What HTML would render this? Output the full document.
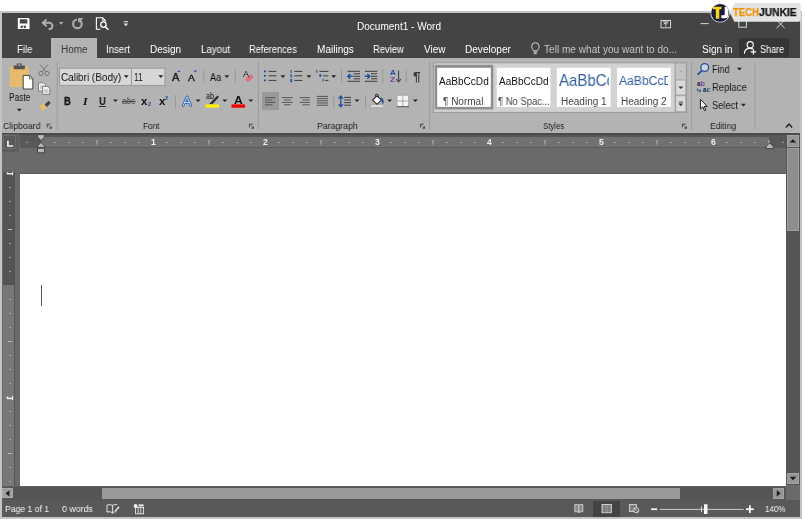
<!DOCTYPE html>
<html><head><meta charset="utf-8"><title>Document1 - Word</title>
<style>
*{box-sizing:border-box;margin:0;padding:0}
html,body{width:805px;height:519px;overflow:hidden;background:#fff}
body{font-family:"Liberation Sans",sans-serif;font-size:10px;position:relative}
.r{position:absolute}
.t{position:absolute;white-space:nowrap;line-height:12px;transform-origin:0 0;will-change:transform}
svg{position:absolute;left:0;top:0}
</style></head><body>
<div class="r" style="left:0px;top:11px;width:802px;height:508px;background:#c4c4c4;"></div>
<div class="r" style="left:2px;top:13px;width:798px;height:45px;background:#444444;"></div>
<div class="r" style="left:51px;top:38px;width:46px;height:20px;background:#b3b3b3;"></div>
<div class="r" style="left:739px;top:38px;width:50px;height:19px;background:#363636;"></div>
<div class="r" style="left:2px;top:58px;width:798px;height:74.6px;background:#b3b3b3;"></div>
<div class="r" style="left:2px;top:132.6px;width:798px;height:2.4px;background:#4b4b4b;"></div>
<div class="r" style="left:2px;top:135px;width:798px;height:365px;background:#6a6a6a;"></div>
<div class="r" style="left:2px;top:135px;width:798px;height:2px;background:#585858;"></div>
<div class="r" style="left:20px;top:137px;width:766px;height:10px;background:#717171;"></div>
<div class="r" style="left:20px;top:137px;width:21px;height:10px;background:#585858;"></div>
<div class="r" style="left:769px;top:137px;width:17px;height:10px;background:#585858;"></div>
<div class="r" style="left:20px;top:147px;width:766px;height:1px;background:#5c5c5c;"></div>
<div class="r" style="left:2px;top:133.5px;width:17px;height:18px;background:#5e5e5e;"></div>
<div class="r" style="left:3.4px;top:135.4px;width:13px;height:13.2px;background:#595959;border:1px solid #6c6c6c;"></div>
<div class="r" style="left:20px;top:172.6px;width:766px;height:314.4px;background:#5c5c5c;"></div>
<div class="r" style="left:20px;top:173.6px;width:766px;height:312.7px;background:#ffffff;"></div>
<div class="r" style="left:2.6px;top:171.9px;width:12.8px;height:315.1px;background:#555555;"></div>
<div class="r" style="left:3.4px;top:171.9px;width:11px;height:315.1px;background:#777777;"></div>
<div class="r" style="left:3.4px;top:171.9px;width:11px;height:113.6px;background:#595959;"></div>
<div class="r" style="left:2.6px;top:171.9px;width:12.8px;height:113.6px;background:#4f4f4f;opacity:.5;"></div>
<div class="r" style="left:786px;top:135px;width:14px;height:350px;background:#555555;"></div>
<div class="r" style="left:787.2px;top:135px;width:11.6px;height:11.6px;background:#969696;border:1px solid #a4a4a4;"></div>
<div class="r" style="left:787.2px;top:147.8px;width:11.6px;height:83.2px;background:#8e8e8e;border:1px solid #a0a0a0;"></div>
<div class="r" style="left:787.2px;top:472.6px;width:11.6px;height:11.2px;background:#969696;border:1px solid #a4a4a4;"></div>
<div class="r" style="left:786px;top:485px;width:14px;height:15px;background:#6a6a6a;"></div>
<div class="r" style="left:2px;top:486.3px;width:784px;height:0.9px;background:#5e5e5e;"></div>
<div class="r" style="left:2px;top:487.2px;width:784px;height:12.8px;background:#555555;"></div>
<div class="r" style="left:2.2px;top:488px;width:10.9px;height:10.4px;background:#9e9e9e;border:1px solid #a8a8a8;"></div>
<div class="r" style="left:101.5px;top:488px;width:578.9px;height:10.6px;background:#9a9a9a;"></div>
<div class="r" style="left:773px;top:488px;width:11px;height:10.7px;background:#969696;border:1px solid #a4a4a4;"></div>
<div class="r" style="left:2px;top:500px;width:798px;height:16.5px;background:#595959;"></div>
<div class="r" style="left:593.3px;top:501px;width:27px;height:15.5px;background:#444444;"></div>
<div class="r" style="left:41px;top:285px;width:1.2px;height:20.8px;background:#555555;"></div>
<div class="r" style="left:261.8px;top:92.2px;width:17.2px;height:18px;background:#9a9a9a;"></div>
<svg width="805" height="519" viewBox="0 0 805 519">
<rect x="26.4" y="141.8" width="1.2" height="1.2" fill="#b9b9b9"/><rect x="54.4" y="141.8" width="1.2" height="1.2" fill="#b9b9b9"/><rect x="68.4" y="141.8" width="1.2" height="1.2" fill="#b9b9b9"/><rect x="82.4" y="141.8" width="1.2" height="1.2" fill="#b9b9b9"/><rect x="96.5" y="140" width="1" height="4.6" fill="#b9b9b9"/><rect x="110.4" y="141.8" width="1.2" height="1.2" fill="#b9b9b9"/><rect x="124.4" y="141.8" width="1.2" height="1.2" fill="#b9b9b9"/><rect x="138.4" y="141.8" width="1.2" height="1.2" fill="#b9b9b9"/><rect x="166.4" y="141.8" width="1.2" height="1.2" fill="#b9b9b9"/><rect x="180.4" y="141.8" width="1.2" height="1.2" fill="#b9b9b9"/><rect x="194.4" y="141.8" width="1.2" height="1.2" fill="#b9b9b9"/><rect x="208.5" y="140" width="1" height="4.6" fill="#b9b9b9"/><rect x="222.4" y="141.8" width="1.2" height="1.2" fill="#b9b9b9"/><rect x="236.4" y="141.8" width="1.2" height="1.2" fill="#b9b9b9"/><rect x="250.4" y="141.8" width="1.2" height="1.2" fill="#b9b9b9"/><rect x="278.4" y="141.8" width="1.2" height="1.2" fill="#b9b9b9"/><rect x="292.4" y="141.8" width="1.2" height="1.2" fill="#b9b9b9"/><rect x="306.4" y="141.8" width="1.2" height="1.2" fill="#b9b9b9"/><rect x="320.5" y="140" width="1" height="4.6" fill="#b9b9b9"/><rect x="334.4" y="141.8" width="1.2" height="1.2" fill="#b9b9b9"/><rect x="348.4" y="141.8" width="1.2" height="1.2" fill="#b9b9b9"/><rect x="362.4" y="141.8" width="1.2" height="1.2" fill="#b9b9b9"/><rect x="390.4" y="141.8" width="1.2" height="1.2" fill="#b9b9b9"/><rect x="404.4" y="141.8" width="1.2" height="1.2" fill="#b9b9b9"/><rect x="418.4" y="141.8" width="1.2" height="1.2" fill="#b9b9b9"/><rect x="432.5" y="140" width="1" height="4.6" fill="#b9b9b9"/><rect x="446.4" y="141.8" width="1.2" height="1.2" fill="#b9b9b9"/><rect x="460.4" y="141.8" width="1.2" height="1.2" fill="#b9b9b9"/><rect x="474.4" y="141.8" width="1.2" height="1.2" fill="#b9b9b9"/><rect x="502.4" y="141.8" width="1.2" height="1.2" fill="#b9b9b9"/><rect x="516.4" y="141.8" width="1.2" height="1.2" fill="#b9b9b9"/><rect x="530.4" y="141.8" width="1.2" height="1.2" fill="#b9b9b9"/><rect x="544.5" y="140" width="1" height="4.6" fill="#b9b9b9"/><rect x="558.4" y="141.8" width="1.2" height="1.2" fill="#b9b9b9"/><rect x="572.4" y="141.8" width="1.2" height="1.2" fill="#b9b9b9"/><rect x="586.4" y="141.8" width="1.2" height="1.2" fill="#b9b9b9"/><rect x="614.4" y="141.8" width="1.2" height="1.2" fill="#b9b9b9"/><rect x="628.4" y="141.8" width="1.2" height="1.2" fill="#b9b9b9"/><rect x="642.4" y="141.8" width="1.2" height="1.2" fill="#b9b9b9"/><rect x="656.5" y="140" width="1" height="4.6" fill="#b9b9b9"/><rect x="670.4" y="141.8" width="1.2" height="1.2" fill="#b9b9b9"/><rect x="684.4" y="141.8" width="1.2" height="1.2" fill="#b9b9b9"/><rect x="698.4" y="141.8" width="1.2" height="1.2" fill="#b9b9b9"/><rect x="726.4" y="141.8" width="1.2" height="1.2" fill="#b9b9b9"/><rect x="740.4" y="141.8" width="1.2" height="1.2" fill="#b9b9b9"/><rect x="754.4" y="141.8" width="1.2" height="1.2" fill="#b9b9b9"/><rect x="768.5" y="140" width="1" height="4.6" fill="#b9b9b9"/><rect x="782.4" y="141.8" width="1.2" height="1.2" fill="#b9b9b9"/><rect x="9.4" y="186.9" width="1.3" height="1.2" fill="#b9b9b9"/><rect x="9.4" y="200.9" width="1.3" height="1.2" fill="#b9b9b9"/><rect x="9.4" y="214.9" width="1.3" height="1.2" fill="#b9b9b9"/><rect x="7.8" y="229" width="4.5" height="1" fill="#b9b9b9"/><rect x="9.4" y="242.9" width="1.3" height="1.2" fill="#b9b9b9"/><rect x="9.4" y="256.9" width="1.3" height="1.2" fill="#b9b9b9"/><rect x="9.4" y="270.9" width="1.3" height="1.2" fill="#b9b9b9"/><rect x="9.4" y="298.9" width="1.3" height="1.2" fill="#b9b9b9"/><rect x="9.4" y="312.9" width="1.3" height="1.2" fill="#b9b9b9"/><rect x="9.4" y="326.9" width="1.3" height="1.2" fill="#b9b9b9"/><rect x="7.8" y="341" width="4.5" height="1" fill="#b9b9b9"/><rect x="9.4" y="354.9" width="1.3" height="1.2" fill="#b9b9b9"/><rect x="9.4" y="368.9" width="1.3" height="1.2" fill="#b9b9b9"/><rect x="9.4" y="382.9" width="1.3" height="1.2" fill="#b9b9b9"/><rect x="9.4" y="410.9" width="1.3" height="1.2" fill="#b9b9b9"/><rect x="9.4" y="424.9" width="1.3" height="1.2" fill="#b9b9b9"/><rect x="9.4" y="438.9" width="1.3" height="1.2" fill="#b9b9b9"/><rect x="7.8" y="453" width="4.5" height="1" fill="#b9b9b9"/><rect x="9.4" y="466.9" width="1.3" height="1.2" fill="#b9b9b9"/><rect x="9.4" y="480.9" width="1.3" height="1.2" fill="#b9b9b9"/>
<g fill="#ececec"><rect x="6.8" y="397.6" width="6" height="1.6"/><rect x="12" y="396" width="1.1" height="4"/><rect x="6.6" y="396.6" width="1.6" height="1.4"/><rect x="6.8" y="173" width="6" height="1.5"/><rect x="12" y="172" width="1.1" height="3.3"/><rect x="6.6" y="172.4" width="1.6" height="1.2"/></g>
<path d="M7.9 140.8 V146 H13.2" fill="none" stroke="#f4f4f4" stroke-width="1.7"/>
<path d="M37.5 134.6 H44.6 V137 L41.05 140.6 L37.5 137 Z" fill="#b8b8b8" stroke="#3c3c3c" stroke-width="0.9" stroke-linejoin="round"/>
<path d="M41.05 142.4 L44.6 146 V147.4 H37.5 V146 Z" fill="#b8b8b8" stroke="#3c3c3c" stroke-width="0.9" stroke-linejoin="round"/>
<path d="M37.5 148.2 H44.6 V152.8 H37.5 Z" fill="#b8b8b8" stroke="#3c3c3c" stroke-width="0.9" stroke-linejoin="round"/>
<path d="M769.7 142.9 L773.2 146.4 V148.6 H766.2 V146.4 Z" fill="#b8b8b8" stroke="#3c3c3c" stroke-width="0.9" stroke-linejoin="round"/>
<path d="M789.8 142.6 L793 139.2 L796.2 142.6 Z" fill="#1a1a1a"/>
<path d="M789.8 476.8 L793 480.2 L796.2 476.8 Z" fill="#1a1a1a"/>
<path d="M9.4 490.2 L9.4 496.4 L5.6 493.3 Z" fill="#1a1a1a"/>
<path d="M776.8 490.2 L776.8 496.4 L780.6 493.3 Z" fill="#1a1a1a"/>
<path d="M17.8 17.9 H28.4 L29.5 19 V29 H17.8 Z" fill="#fff"/><rect x="19.8" y="19.3" width="7.5" height="4.2" fill="#444"/><rect x="20.6" y="25.7" width="5.3" height="2.4" fill="#444"/><rect x="22.7" y="26.3" width="1.2" height="1.8" fill="#fff"/>
<path d="M46.6 19.4 L42.8 22.8 L46.6 26.4 M43.2 22.8 H50 A3.2 3.2 0 0 1 50 29 H48.6" fill="none" stroke="#b0b0b0" stroke-width="1.9" stroke-linejoin="miter"/>
<path d="M58.9 22 H63.5 L61.2 24.8 Z" fill="#b0b0b0"/>
<circle cx="77.4" cy="23.9" r="4.3" fill="none" stroke="#ababab" stroke-width="2.2"/><rect x="76.8" y="17.4" width="1.3" height="5" fill="#444"/><path d="M78.2 18 H83.2 L79.4 22.4 H78.2 Z" fill="#ababab"/>
<path d="M100.4 29.2 H96.4 V17.8 H102.6 L105.4 20.6 V21.4" fill="none" stroke="#fff" stroke-width="1.1"/><path d="M102.4 18 V20.8 H105.2" fill="none" stroke="#fff" stroke-width="0.8"/><circle cx="103.4" cy="24.6" r="2.7" fill="#444" stroke="#fff" stroke-width="1.3"/><path d="M105.4 26.8 L108.4 29.8" stroke="#fff" stroke-width="1.6"/>
<rect x="123.8" y="21.2" width="4.2" height="1" fill="#e8e8e8"/><path d="M123.6 23.5 H128.2 L125.9 26.3 Z" fill="#e8e8e8"/>
<rect x="661" y="20.4" width="9.6" height="7.4" fill="none" stroke="#e4e4e4" stroke-width="0.9"/><path d="M665.8 26.4 V22.4 M663.8 24.2 L665.8 22.2 L667.8 24.2 M663 21.9 H668.6" fill="none" stroke="#e4e4e4" stroke-width="0.9"/>
<path d="M700.6 23.6 H708.8" fill="none" stroke="#e4e4e4" stroke-width="0.9"/>
<rect x="738.8" y="19.6" width="7.6" height="7.6" fill="none" stroke="#e4e4e4" stroke-width="0.9"/>
<path d="M776.6 20.2 L784.6 28 M784.6 20.2 L776.6 28" fill="none" stroke="#e4e4e4" stroke-width="0.9"/>
<path d="M533.7 50.8 C532.2 49 531.7 47.8 531.7 46.4 A3.7 3.7 0 0 1 539.1 46.4 C539.1 47.8 538.6 49 537.1 50.8 Z M533.4 52.2 H537.2 M534 53.8 H536.6" fill="none" stroke="#e8e8e8" stroke-width="0.9"/>
<circle cx="750.2" cy="44.7" r="3.1" fill="none" stroke="#fff" stroke-width="1.1"/><path d="M744.4 53.8 C744.4 49.8 746.8 48.4 750.2 48.4 C751.4 48.4 752.4 48.6 753.2 49" fill="none" stroke="#fff" stroke-width="1.1"/><path d="M753.4 49.2 V54.6 M750.7 51.9 H756.1" stroke="#fff" stroke-width="1.1" fill="none"/>
<rect x="56.7" y="62" width="1" height="67.5" fill="#9c9c9c"/>
<rect x="257.9" y="62" width="1" height="67.5" fill="#9c9c9c"/>
<rect x="429.1" y="62" width="1" height="67.5" fill="#9c9c9c"/>
<rect x="691.1" y="62" width="1" height="67.5" fill="#9c9c9c"/>
<rect x="754.3" y="62" width="1" height="67.5" fill="#9c9c9c"/>
<path d="M47.2 127.4 V124.2 H50.4" fill="none" stroke="#444" stroke-width="1"/>
<path d="M48.6 125.6 L51 128" stroke="#555" stroke-width="0.9"/><path d="M51.8 126 V128.8 H49 Z" fill="#444"/>
<path d="M249.4 127.4 V124.2 H252.6" fill="none" stroke="#444" stroke-width="1"/>
<path d="M250.8 125.6 L253.2 128" stroke="#555" stroke-width="0.9"/><path d="M254 126 V128.8 H251.2 Z" fill="#444"/>
<path d="M420.4 127.4 V124.2 H423.6" fill="none" stroke="#444" stroke-width="1"/>
<path d="M421.8 125.6 L424.2 128" stroke="#555" stroke-width="0.9"/><path d="M425 126 V128.8 H422.2 Z" fill="#444"/>
<path d="M682.4 127.4 V124.2 H685.6" fill="none" stroke="#444" stroke-width="1"/>
<path d="M683.8 125.6 L686.2 128" stroke="#555" stroke-width="0.9"/><path d="M687 126 V128.8 H684.2 Z" fill="#444"/>
<path d="M785.8 127.4 L789 124 L792.2 127.4" fill="none" stroke="#222" stroke-width="1.5"/>
<rect x="10" y="66.6" width="18.6" height="20.4" rx="0.8" fill="#e6bb6d"/>
<path d="M13.6 69.2 V65.4 H16.8 V63.4 H21.6 V65.4 H24.8 V69.2 Z" fill="#555"/><rect x="18.2" y="64.4" width="2" height="1.4" fill="#b3b3b3"/>
<path d="M23.2 75.4 H29.6 L32.8 78.6 V89 H23.2 Z" fill="#fff" stroke="#444" stroke-width="1"/><path d="M29.4 75.6 V78.8 H32.6" fill="none" stroke="#444" stroke-width="0.8"/>
<path d="M16.8 108.8 H21.8 L19.3 111.5 Z" fill="#262626"/>
<g fill="none" stroke="#777" stroke-width="1"><circle cx="41" cy="73.4" r="2.1"/><circle cx="47" cy="73.4" r="2.1"/><path d="M42.2 71.6 L47.6 64.6 M45.8 71.6 L40.4 64.6"/></g>
<g fill="#f4f4f4" stroke="#777" stroke-width="0.9"><path d="M38.5 82.8 H43.4 L45.6 85 V91 H38.5 Z"/><path d="M42.6 86.4 H47.6 L49.8 88.6 V94.4 H42.6 Z"/></g><path d="M40 86 H44 M40 88 H42 M44 90 H48.4 M44 92 H48.4" stroke="#888" stroke-width="0.7"/>
<path d="M39.2 106.8 L43.4 102.8 L47.2 106.8 L43 111 Z" fill="#e6bb6d"/><path d="M44.6 104.6 L48.6 100.8 L50.8 103 L46.8 107 Z" fill="#444"/>
<rect x="59.5" y="68.2" width="105.4" height="17.2" fill="#d7d7d7" stroke="#9a9a9a" stroke-width="1"/><rect x="130.9" y="68.2" width="1" height="17.2" fill="#9a9a9a"/>
<path d="M123.7 75.2 H128.7 L126.2 77.9 Z" fill="#262626"/>
<path d="M158.3 75.2 H163.3 L160.8 77.9 Z" fill="#262626"/>
<rect x="98.8" y="106" width="7" height="0.9" fill="#222"/>
<path d="M112.9 99.4 H117.9 L115.4 102.1 Z" fill="#262626"/>
<rect x="174.9" y="95" width="1" height="13.5" fill="#989898"/>
<path d="M183.2 105.6 L187 96.8 L190.8 105.6 M185 102.4 H189" fill="none" stroke="#2b62b8" stroke-width="2.6" stroke-linejoin="round" stroke-linecap="round"/><path d="M183.2 105.6 L187 96.8 L190.8 105.6 M185 102.4 H189" fill="none" stroke="#dbe7f7" stroke-width="0.9" stroke-linejoin="round" stroke-linecap="round"/>
<path d="M195.6 99.4 H200.6 L198.1 102.1 Z" fill="#262626"/>
<path d="M209 104.2 L217.4 95.6 L219 97 L212.2 104.2 Z" fill="#2a2a2a"/>
<rect x="205.5" y="104.4" width="13.5" height="3.3" fill="#ffef00"/>
<path d="M222.3 99.4 H227.3 L224.8 102.1 Z" fill="#262626"/>
<rect x="231.5" y="104.4" width="13.5" height="3.3" fill="#f40000"/>
<path d="M248.3 99.4 H253.3 L250.8 102.1 Z" fill="#262626"/>
<path d="M177.2 72.1 L178.8 70.2 L180.4 72.1 Z" fill="#1f4f9f"/>
<path d="M193.6 70.6 L197 70.6 L195.3 72.6 Z" fill="#1f4f9f"/>
<rect x="203.2" y="69" width="1" height="13.5" fill="#989898"/>
<path d="M224.3 75.2 H229.3 L226.8 77.9 Z" fill="#262626"/>
<rect x="234.8" y="69" width="1" height="13.5" fill="#989898"/>
<path d="M245 79.6 L250.6 74 L253.6 77 L248 82.6 Z" fill="#e2707f"/>
<rect x="264" y="70.5" width="1.8" height="1.8" fill="#1f4f9f"/>
<rect x="268.6" y="70.9" width="7.8" height="1" fill="#3e3e3e"/>
<rect x="264" y="74.9" width="1.8" height="1.8" fill="#1f4f9f"/>
<rect x="268.6" y="75.3" width="7.8" height="1" fill="#3e3e3e"/>
<rect x="264" y="79.5" width="1.8" height="1.8" fill="#1f4f9f"/>
<rect x="268.6" y="79.9" width="7.8" height="1" fill="#3e3e3e"/>
<path d="M280.4 75.2 H285.4 L282.9 77.9 Z" fill="#262626"/>
<rect x="294.4" y="70.9" width="8" height="1" fill="#3e3e3e"/>
<rect x="294.4" y="75.3" width="8" height="1" fill="#3e3e3e"/>
<rect x="294.4" y="79.9" width="8" height="1" fill="#3e3e3e"/>
<g fill="#1f4f9f"><rect x="290.6" y="70" width="1" height="3"/><rect x="290" y="74.4" width="2" height="0.9"/><rect x="291.2" y="75" width="0.9" height="1.4"/><rect x="290" y="76.4" width="2.2" height="0.9"/><rect x="290" y="79" width="2" height="0.8"/><rect x="291.2" y="79.4" width="0.9" height="2.6"/><rect x="290" y="80.2" width="2" height="0.7"/><rect x="290" y="81.4" width="2" height="0.8"/></g>
<path d="M306.4 75.2 H311.4 L308.9 77.9 Z" fill="#262626"/>
<g fill="#1f4f9f"><rect x="316.4" y="69.8" width="1" height="3"/><rect x="319.4" y="74.2" width="1.8" height="2.6"/><rect x="322.6" y="78.8" width="0.9" height="2.8"/></g>
<rect x="319.4" y="70.9" width="9" height="1" fill="#3e3e3e"/>
<rect x="322.8" y="75.3" width="5.6" height="1" fill="#3e3e3e"/>
<rect x="325" y="79.9" width="3.4" height="1" fill="#3e3e3e"/>
<path d="M331.2 75.2 H336.2 L333.7 77.9 Z" fill="#262626"/>
<rect x="341" y="69" width="1" height="13.5" fill="#989898"/>
<rect x="347.4" y="70.8" width="12.6" height="1" fill="#3e3e3e"/>
<rect x="353.6" y="73.3" width="6.4" height="1" fill="#3e3e3e"/>
<rect x="353.6" y="75.8" width="6.4" height="1" fill="#3e3e3e"/>
<rect x="353.6" y="78.3" width="6.4" height="1" fill="#3e3e3e"/>
<rect x="347.4" y="80.8" width="12.6" height="1" fill="#3e3e3e"/>
<path d="M348 76.3 H352.8 M350.2 73.9 L347.8 76.3 L350.2 78.7" fill="none" stroke="#1f4f9f" stroke-width="1.4"/>
<rect x="364.8" y="70.8" width="12.4" height="1" fill="#3e3e3e"/>
<rect x="371" y="73.3" width="6.2" height="1" fill="#3e3e3e"/>
<rect x="371" y="75.8" width="6.2" height="1" fill="#3e3e3e"/>
<rect x="371" y="78.3" width="6.2" height="1" fill="#3e3e3e"/>
<rect x="364.8" y="80.8" width="12.4" height="1" fill="#3e3e3e"/>
<path d="M364.8 76.3 H369.6 M367.4 73.9 L369.8 76.3 L367.4 78.7" fill="none" stroke="#1f4f9f" stroke-width="1.4"/>
<rect x="382.2" y="69" width="1" height="13.5" fill="#989898"/>
<path d="M398.6 70.4 V81.6 M396.2 79 L398.6 81.8 L401 79" fill="none" stroke="#444" stroke-width="1.1"/>
<rect x="405.7" y="69" width="1" height="13.5" fill="#989898"/>
<rect x="265" y="97.1" width="10.2" height="1" fill="#555"/>
<rect x="265" y="99.5" width="7.4" height="1" fill="#555"/>
<rect x="265" y="101.9" width="10.2" height="1" fill="#555"/>
<rect x="265" y="104.3" width="7.4" height="1" fill="#555"/>
<rect x="281.8" y="97.1" width="11.2" height="1" fill="#5a5a5a"/>
<rect x="284" y="99.5" width="6.8" height="1" fill="#5a5a5a"/>
<rect x="281.8" y="101.9" width="11.2" height="1" fill="#5a5a5a"/>
<rect x="284" y="104.3" width="6.8" height="1" fill="#5a5a5a"/>
<rect x="299.6" y="97.1" width="10.2" height="1" fill="#5a5a5a"/>
<rect x="302.4" y="99.5" width="7.4" height="1" fill="#5a5a5a"/>
<rect x="299.6" y="101.9" width="10.2" height="1" fill="#5a5a5a"/>
<rect x="302.4" y="104.3" width="7.4" height="1" fill="#5a5a5a"/>
<rect x="316.8" y="95.9" width="11.2" height="1" fill="#555"/>
<rect x="316.8" y="98.1" width="11.2" height="1" fill="#555"/>
<rect x="316.8" y="100.3" width="11.2" height="1" fill="#555"/>
<rect x="316.8" y="102.5" width="11.2" height="1" fill="#555"/>
<rect x="316.8" y="104.7" width="11.2" height="1" fill="#555"/>
<rect x="333.2" y="95" width="1" height="13.5" fill="#989898"/>
<rect x="344.2" y="96.9" width="6.8" height="1" fill="#3e3e3e"/>
<rect x="344.2" y="99.5" width="6.8" height="1" fill="#3e3e3e"/>
<rect x="344.2" y="102.1" width="6.8" height="1" fill="#3e3e3e"/>
<rect x="344.2" y="104.7" width="6.8" height="1" fill="#3e3e3e"/>
<path d="M340.8 96.2 V106.4 M338.6 98.6 L340.8 96 L343 98.6 M338.6 104.2 L340.8 106.8 L343 104.2" fill="none" stroke="#1f4f9f" stroke-width="1.3"/>
<path d="M354.5 99.4 H359.5 L357 102.1 Z" fill="#262626"/>
<rect x="365" y="95" width="1" height="13.5" fill="#989898"/>
<path d="M372.6 100 L377 95.8 L381.4 100.2 L377 104.4 Z" fill="#f8f8f8" stroke="#333" stroke-width="1.1" stroke-linejoin="round"/><path d="M375.7 97 Q374.8 93.6 377 94 Q378.9 94.4 378.3 97.6" fill="none" stroke="#333" stroke-width="1"/><path d="M380.8 97.4 Q384.6 99.4 382.8 103.8 Q381.8 100.6 380.8 97.4 Z" fill="#1f4f9f" stroke="#1f4f9f" stroke-width="0.6"/>
<rect x="370.8" y="105" width="12.7" height="2.1" fill="#e8e8e8" stroke="#9a9a9a" stroke-width="0.4"/>
<path d="M387.1 99.4 H392.1 L389.6 102.1 Z" fill="#262626"/>
<rect x="397" y="95.2" width="11.6" height="11.6" fill="#f4f4f4" stroke="#a0a0a0" stroke-width="0.8"/><path d="M402.8 95.2 V106.8 M397 101 H408.6" stroke="#a0a0a0" stroke-width="0.9"/><rect x="396.8" y="106.2" width="12" height="1" fill="#555"/>
<path d="M412.9 99.4 H417.9 L415.4 102.1 Z" fill="#262626"/>
<rect x="433.4" y="62.8" width="253" height="49.6" fill="#d2d2d2" stroke="#9a9a9a" stroke-width="1"/>
<rect x="434.7" y="64.8" width="58.6" height="44.6" fill="#8e8e8e"/>
<rect x="437.2" y="67.8" width="53.6" height="39.1" fill="#fff"/>
<rect x="496.8" y="67.8" width="53.6" height="39.1" fill="#fff"/>
<rect x="556.8" y="67.8" width="53.8" height="39.1" fill="#fff"/>
<rect x="617" y="67.8" width="53.8" height="39.1" fill="#fff"/>
<rect x="675.2" y="62.8" width="11.2" height="49.6" fill="#c4c4c4" stroke="#9a9a9a" stroke-width="1"/>
<rect x="675.7" y="80" width="10.2" height="15" fill="#dadada" stroke="#9a9a9a" stroke-width="0.8"/><rect x="675.7" y="95.8" width="10.2" height="16" fill="#dadada" stroke="#9a9a9a" stroke-width="0.8"/>
<path d="M679 72 L680.8 70 L682.6 72 Z" fill="#a8a8a8"/>
<path d="M678.3 86.4 H683.3 L680.8 89.1 Z" fill="#333"/>
<rect x="678.8" y="101.6" width="4" height="0.9" fill="#333"/>
<path d="M678.3 103.6 H683.3 L680.8 106.3 Z" fill="#333"/>
<circle cx="704.7" cy="67.5" r="3.9" fill="#d2d6dc" stroke="#1f4f9f" stroke-width="1.3"/><path d="M701.8 70.6 L697.6 74.6" stroke="#1f4f9f" stroke-width="1.7"/>
<path d="M736.9 67.8 H741.9 L739.4 70.5 Z" fill="#262626"/>
<path d="M697.4 88.4 V90.8 H700.8 M699.4 89.2 L701 90.8 L699.4 92.4" fill="none" stroke="#1f4f9f" stroke-width="0.9"/>
<rect x="700.6" y="82.4" width="3.6" height="1" fill="#7b3fa0" opacity="0"/>
<path d="M700.4 99.2 V109 L702.8 106.8 L704.4 110.6 L705.8 110 L704.2 106.4 H707.2 Z" fill="#f8f8f8" stroke="#222" stroke-width="1" stroke-linejoin="round"/>
<path d="M740.9 103.8 H745.9 L743.4 106.5 Z" fill="#262626"/>
<path d="M112.6 505.4 V512.6 M112.6 505.4 Q109.8 504 107 505 V512 Q109.8 511.2 112.6 512.6 Q114.4 511.6 116.4 511.8 M112.6 505.4 Q114.6 504.2 117.2 504.6" fill="none" stroke="#ececec" stroke-width="0.9"/><path d="M114.8 510.6 L118.6 506.2 L119.6 507.2 L115.8 511.4 Z" fill="#ececec"/><path d="M112.6 512.8 V514" stroke="#ececec" stroke-width="0.8"/>
<rect x="135.6" y="507.4" width="8" height="6.4" fill="none" stroke="#ececec" stroke-width="0.9"/><path d="M138.2 507.4 V513.8 M140.8 507.4 V513.8" stroke="#ececec" stroke-width="0.8"/><rect x="138.6" y="504.4" width="5" height="2" fill="#ececec"/><circle cx="135.6" cy="506" r="2" fill="#ececec"/>
<path d="M578.8 505 V512.4 M578.8 505 Q576.8 504 574.8 504.6 V511.8 Q576.8 511.4 578.8 512.4 Q580.8 511.4 582.8 511.8 V504.6 Q580.8 504 578.8 505" fill="#8a8a8a" stroke="#e0e0e0" stroke-width="0.8"/>
<rect x="602" y="504.5" width="9.4" height="8.2" fill="#8c8c8c" stroke="#d8d8d8" stroke-width="0.9"/><path d="M604.4 505 V512.4 M609 505 V512.4" stroke="#707070" stroke-width="0.8"/>
<rect x="629.4" y="504.6" width="7.2" height="7" fill="#8a8a8a" stroke="#d4d4d4" stroke-width="0.9"/><path d="M631 506.6 H635.4 M631 508.4 H633" stroke="#666" stroke-width="0.7"/><circle cx="636.3" cy="510.3" r="2.5" fill="#595959" stroke="#ececec" stroke-width="0.9"/><path d="M634.8 509 L637.8 511.8" stroke="#ececec" stroke-width="0.8"/>
<rect x="651" y="508.3" width="6.2" height="1.8" fill="#f0f0f0"/>
<rect x="660" y="508.9" width="83.6" height="0.9" fill="#dadada"/><rect x="701" y="506.4" width="1" height="5.8" fill="#dadada"/>
<rect x="704" y="504.2" width="3.5" height="9.8" fill="#f6f6f6"/>
<rect x="746" y="508.3" width="7.8" height="1.8" fill="#f6f6f6"/><rect x="749" y="505.3" width="1.8" height="7.8" fill="#f6f6f6"/>
<path d="M734.6 3.1 H798.6 Q800.8 3.1 800.8 5.3 V19.6 Q800.8 21.8 798.6 21.8 H734.4 L729.6 12.6 Z" fill="#e3e3e3"/>
<circle cx="720.1" cy="12.9" r="9.7" fill="#e6e6e6"/><circle cx="720.1" cy="12.9" r="8.9" fill="#171c3a"/>
<path d="M713 6.8 H721.5 V9.3 H719.3 V18.7 H715.8 V9.3 H713 Z" fill="#f8d417"/>
<clipPath id="cj"><circle cx="720.1" cy="12.9" r="8.9"/></clipPath>
<path clip-path="url(#cj)" d="M724.7 6.8 H728.4 V14.8 Q728.4 18.2 725 18.2 H721.3 V15.2 H723.4 Q724.7 15.2 724.7 14 Z" fill="#fff"/>
</svg>
<span class="t" style="left:16.5px;top:43.64px;font-size:10px;color:#fff;transform:scaleX(0.961);">File</span>
<span class="t" style="left:60.5px;top:43.64px;font-size:10px;color:#3a3a3a;transform:scaleX(0.993);">Home</span>
<span class="t" style="left:106.4px;top:43.64px;font-size:10px;color:#fff;transform:scaleX(0.959);">Insert</span>
<span class="t" style="left:150.2px;top:43.64px;font-size:10px;color:#fff;transform:scaleX(0.992);">Design</span>
<span class="t" style="left:200.6px;top:43.64px;font-size:10px;color:#fff;transform:scaleX(0.972);">Layout</span>
<span class="t" style="left:249.3px;top:43.64px;font-size:10px;color:#fff;transform:scaleX(0.933);">References</span>
<span class="t" style="left:316.8px;top:43.64px;font-size:10px;color:#fff;transform:scaleX(1.006);">Mailings</span>
<span class="t" style="left:373.3px;top:43.64px;font-size:10px;color:#fff;transform:scaleX(0.939);">Review</span>
<span class="t" style="left:423.5px;top:43.64px;font-size:10px;color:#fff;transform:scaleX(1.000);">View</span>
<span class="t" style="left:464.5px;top:43.64px;font-size:10px;color:#fff;transform:scaleX(1.007);">Developer</span>
<span class="t" style="left:544.2px;top:43.64px;font-size:10px;color:#c4c4c4;transform:scaleX(1.010);">Tell me what you want to do...</span>
<span class="t" style="left:702.4px;top:43.64px;font-size:10px;color:#fff;transform:scaleX(0.988);">Sign in</span>
<span class="t" style="left:759.8px;top:43.64px;font-size:10px;color:#fff;transform:scaleX(0.907);">Share</span>
<span class="t" style="left:357.4px;top:20.73px;font-size:10px;color:#fff;transform:scaleX(1.003);">Document1 - Word</span>
<span class="t" style="left:150.6px;top:136.02px;font-size:8.6px;color:#f0f0f0;font-weight:bold;">1</span>
<span class="t" style="left:262.6px;top:136.02px;font-size:8.6px;color:#f0f0f0;font-weight:bold;">2</span>
<span class="t" style="left:374.6px;top:136.02px;font-size:8.6px;color:#f0f0f0;font-weight:bold;">3</span>
<span class="t" style="left:486.6px;top:136.02px;font-size:8.6px;color:#f0f0f0;font-weight:bold;">4</span>
<span class="t" style="left:598.6px;top:136.02px;font-size:8.6px;color:#f0f0f0;font-weight:bold;">5</span>
<span class="t" style="left:710.6px;top:136.02px;font-size:8.6px;color:#f0f0f0;font-weight:bold;">6</span>
<span class="t" style="left:3px;top:120.07px;font-size:9.6px;color:#222222;transform:scaleX(0.913);">Clipboard</span>
<span class="t" style="left:142.8px;top:120.07px;font-size:9.6px;color:#222222;transform:scaleX(0.859);">Font</span>
<span class="t" style="left:316.8px;top:120.07px;font-size:9.6px;color:#222222;transform:scaleX(0.908);">Paragraph</span>
<span class="t" style="left:543.3px;top:120.07px;font-size:9.6px;color:#222222;transform:scaleX(0.815);">Styles</span>
<span class="t" style="left:710px;top:120.07px;font-size:9.6px;color:#222222;transform:scaleX(0.893);">Editing</span>
<span class="t" style="left:8.8px;top:91.83px;font-size:10px;color:#111;transform:scaleX(0.829);">Paste</span>
<span class="t" style="left:61.4px;top:71.16px;font-size:10.8px;color:#111;transform:scaleX(0.920);">Calibri (Body)</span>
<span class="t" style="left:134.4px;top:71.16px;font-size:10.8px;color:#111;transform:scaleX(0.784);">11</span>
<span class="t" style="left:64.2px;top:94.89px;font-size:11px;color:#111;transform:scaleX(0.855);font-weight:bold;-webkit-text-stroke:0.3px #111;">B</span>
<span class="t" style="left:83px;top:94.89px;font-size:11px;color:#111;transform:scaleX(1.074);font-weight:bold;font-style:italic;font-family:'Liberation Serif',serif;">I</span>
<span class="t" style="left:98.8px;top:94.89px;font-size:11px;color:#111;transform:scaleX(0.880);font-weight:bold;">U</span>
<span class="t" style="left:122px;top:95.38px;font-size:9px;color:#444;transform:scaleX(0.930);text-decoration:line-through;">abc</span>
<span class="t" style="left:141px;top:94.72px;font-size:11.5px;color:#111;transform:scaleX(0.937);font-weight:bold;">x</span>
<span class="t" style="left:147.8px;top:98.46px;font-size:5.6px;color:#1f4f9f;transform:scaleX(0.960);font-weight:bold;">2</span>
<span class="t" style="left:158.5px;top:94.72px;font-size:11.5px;color:#111;transform:scaleX(0.937);font-weight:bold;">x</span>
<span class="t" style="left:165.2px;top:91.66px;font-size:5.6px;color:#1f4f9f;transform:scaleX(0.960);font-weight:bold;">2</span>
<span class="t" style="left:206px;top:91.36px;font-size:8.2px;color:#111;transform:scaleX(0.878);">ab</span>
<span class="t" style="left:234px;top:93.52px;font-size:11.2px;color:#111;transform:scaleX(1.087);font-weight:bold;">A</span>
<span class="t" style="left:171.6px;top:70.86px;font-size:10.8px;color:#1c1c1c;transform:scaleX(1.027);-webkit-text-stroke:0.4px #1c1c1c;">A</span>
<span class="t" style="left:188.4px;top:71.77px;font-size:9.6px;color:#1c1c1c;transform:scaleX(1.061);-webkit-text-stroke:0.4px #1c1c1c;">A</span>
<span class="t" style="left:210px;top:70.96px;font-size:10.5px;color:#111;transform:scaleX(0.872);">Aa</span>
<span class="t" style="left:242.6px;top:68.48px;font-size:9px;color:#1c1c1c;transform:scaleX(0.931);">A</span>
<span class="t" style="left:389.6px;top:67.10px;font-size:7.8px;color:#1f4f9f;transform:scaleX(1.028);font-weight:bold;">A</span>
<span class="t" style="left:389.8px;top:73.90px;font-size:7.8px;color:#7b3fa0;transform:scaleX(1.091);font-weight:bold;">Z</span>
<span class="t" style="left:413px;top:70.64px;font-size:12px;color:#3a3a3a;transform:scaleX(1.136);font-weight:bold;">¶</span>
<span class="t" style="left:439.3px;top:75.53px;font-size:10px;color:#111;transform:scaleX(1.005);">AaBbCcDd</span>
<span class="t" style="left:499.3px;top:75.53px;font-size:10px;color:#111;transform:scaleX(1.001);">AaBbCcDd</span>
<span class="t" style="left:443.3px;top:95.73px;font-size:10px;color:#444;transform:scaleX(0.990);">¶ Normal</span>
<span class="t" style="left:497.7px;top:95.73px;font-size:10px;color:#444;transform:scaleX(0.945);">¶ No Spac...</span>
<span class="t" style="left:560.8px;top:95.73px;font-size:10px;color:#444;transform:scaleX(0.991);">Heading 1</span>
<span class="t" style="left:621px;top:95.73px;font-size:10px;color:#444;transform:scaleX(0.998);">Heading 2</span>
<span class="t" style="left:712.3px;top:63.36px;font-size:10.5px;color:#1a1a1a;transform:scaleX(0.866);">Find</span>
<span class="t" style="left:697.2px;top:77.83px;font-size:8px;color:#222;transform:scaleX(0.835);font-weight:bold;">a<span style="color:#7b3fa0">b</span></span>
<span class="t" style="left:702.6px;top:84.43px;font-size:8px;color:#222;transform:scaleX(0.808);font-weight:bold;">a<span style="color:#1f4f9f">c</span></span>
<span class="t" style="left:712.3px;top:81.36px;font-size:10.5px;color:#1a1a1a;transform:scaleX(0.901);">Replace</span>
<span class="t" style="left:712.3px;top:99.36px;font-size:10.5px;color:#1a1a1a;transform:scaleX(0.887);">Select</span>
<div class="r" style="left:0;top:0;width:609px;height:519px;overflow:hidden"><span class="t" style="left:559.3px;top:74.56px;font-size:15.7px;color:#2f5d9f;transform:scaleX(0.954);">AaBbCc</span></div>
<div class="r" style="left:0;top:0;width:668.4px;height:519px;overflow:hidden"><span class="t" style="left:619px;top:74.67px;font-size:12.5px;color:#2f5d9f;transform:scaleX(0.971);">AaBbCcD</span></div>
<span class="t" style="left:4.7px;top:503.47px;font-size:9.6px;color:#f2f2f2;transform:scaleX(0.899);">Page 1 of 1</span>
<span class="t" style="left:62px;top:503.47px;font-size:9.6px;color:#f2f2f2;transform:scaleX(0.917);">0 words</span>
<span class="t" style="left:764.5px;top:503.47px;font-size:9.6px;color:#f2f2f2;transform:scaleX(0.835);">140%</span>
<span class="t" style="left:733.4px;top:5.99px;font-size:10.7px;color:#f39200;transform:scaleX(0.887);font-weight:bold;-webkit-text-stroke:0.25px;">TECH</span>
<span class="t" style="left:759.2px;top:5.99px;font-size:10.7px;color:#111;transform:scaleX(0.959);font-weight:bold;-webkit-text-stroke:0.25px;">JUNKIE</span>
</body></html>
